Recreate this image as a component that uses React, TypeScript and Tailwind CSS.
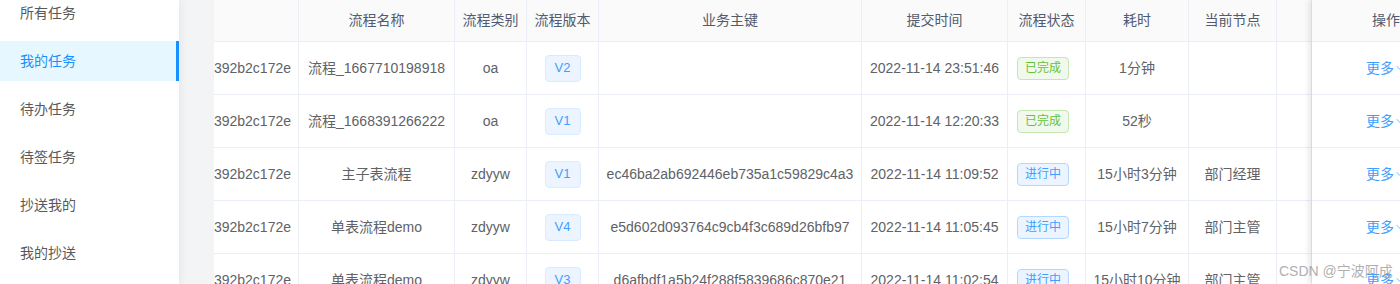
import React from 'react';
import { ChevronDown } from 'lucide-react';

interface TaskRow {
  id: string;
  name: string;
  category: string;
  version: string;
  bizKey: string;
  submitTime: string;
  status: 'done' | 'running';
  duration: string;
  node: string;
}

const ROWS: TaskRow[] = [
  { id: '392b2c172e', name: '流程_1667710198918', category: 'oa', version: 'V2', bizKey: '', submitTime: '2022-11-14 23:51:46', status: 'done', duration: '1分钟', node: '' },
  { id: '392b2c172e', name: '流程_1668391266222', category: 'oa', version: 'V1', bizKey: '', submitTime: '2022-11-14 12:20:33', status: 'done', duration: '52秒', node: '' },
  { id: '392b2c172e', name: '主子表流程', category: 'zdyyw', version: 'V1', bizKey: 'ec46ba2ab692446eb735a1c59829c4a3', submitTime: '2022-11-14 11:09:52', status: 'running', duration: '15小时3分钟', node: '部门经理' },
  { id: '392b2c172e', name: '单表流程demo', category: 'zdyyw', version: 'V4', bizKey: 'e5d602d093764c9cb4f3c689d26bfb97', submitTime: '2022-11-14 11:05:45', status: 'running', duration: '15小时7分钟', node: '部门主管' },
  { id: '392b2c172e', name: '单表流程demo', category: 'zdyyw', version: 'V3', bizKey: 'd6afbdf1a5b24f288f5839686c870e21', submitTime: '2022-11-14 11:02:54', status: 'running', duration: '15小时10分钟', node: '部门主管' },
];

const MENU = ['所有任务', '我的任务', '待办任务', '待签任务', '抄送我的', '我的抄送'];

const HEADERS = ['', '流程名称', '流程类别', '流程版本', '业务主键', '提交时间', '流程状态', '耗时', '当前节点', ''];

const GRID = 'grid grid-cols-[85px_156px_72px_72px_263px_146px_78px_103px_88px_35px]';

const cell = 'flex items-center justify-center border-r border-b border-[#ebeef5] whitespace-nowrap overflow-hidden';

const StatusTag: React.FC<{ status: TaskRow['status'] }> = ({ status }) =>
  status === 'done' ? (
    <span className="h-[23px] px-[7px] flex items-center rounded-[4px] border border-[#c2e7b0] bg-[#f0f9eb] text-[#67c23a] text-[12px]">
      已完成
    </span>
  ) : (
    <span className="h-[23px] px-[7px] flex items-center rounded-[4px] border border-[#b3d8ff] bg-[#ecf5ff] text-[#409eff] text-[12px]">
      进行中
    </span>
  );

export default function App() {
  return (
    <div
      className="relative flex w-[1400px] h-[284px] overflow-hidden bg-[#f3f4f5] text-[14px] text-[#606266]"
      style={{ fontFamily: '"Liberation Sans", "Noto Sans CJK SC", sans-serif' }}
    >
      {/* side menu */}
      <div className="w-[179px] shrink-0 bg-white shadow-[2px_0_8px_rgba(0,0,0,0.06)] z-10">
        <ul className="mt-[-7px] flex flex-col gap-2">
          {MENU.map((item, i) => (
            <li
              key={item}
              className={`h-10 flex items-center pl-5 ${
                i === 1
                  ? 'bg-[#e6f7ff] text-[#1890ff] border-r-[3px] border-[#1890ff]'
                  : 'text-[#595959]'
              }`}
            >
              {item}
            </li>
          ))}
        </ul>
      </div>

      {/* table */}
      <div className="ml-[35px] flex bg-white">
        <div className="w-[1098px] shrink-0 overflow-hidden">
          <div className={`${GRID} h-[42px] bg-[#fafafa] text-[#515a6e]`}>
            {HEADERS.map((h, i) => (
              <div key={i} className={cell}>{h}</div>
            ))}
          </div>
          {ROWS.map((r, i) => (
            <div key={i} className={`${GRID} h-[53px]`}>
              <div className={`${cell} justify-end pr-[7px]`}>{r.id}</div>
              <div className={cell}>{r.name}</div>
              <div className={cell}>{r.category}</div>
              <div className={cell}>
                <span className="w-9 h-[27px] flex items-center justify-center rounded-[4px] border border-[#d9ecff] bg-[#ecf5ff] text-[#409eff] text-[13px]">
                  {r.version}
                </span>
              </div>
              <div className={cell}>{r.bizKey}</div>
              <div className={cell}>{r.submitTime}</div>
              <div className={`${cell} justify-start pl-[9px]`}>
                <StatusTag status={r.status} />
              </div>
              <div className={cell}>{r.duration}</div>
              <div className={cell}>{r.node}</div>
              <div className={cell}></div>
            </div>
          ))}
        </div>

        {/* fixed action column */}
        <div className="w-[148px] shrink-0 bg-white shadow-[-3px_0_6px_rgba(0,0,0,0.1)] z-10">
          <div className="h-[42px] flex items-center justify-center bg-[#fafafa] border-b border-[#ebeef5] text-[#515a6e]">
            操作
          </div>
          {ROWS.map((_, i) => (
            <div key={i} className="h-[53px] flex items-center justify-center gap-0 border-b border-[#ebeef5] text-[#409eff]">
              更多
              <ChevronDown size={12} strokeWidth={1.5} />
            </div>
          ))}
        </div>
      </div>

      <div className="absolute left-[1279px] top-[261px] text-[14px] text-[#9a9a9a]/80 z-20">
        CSDN @宁波阿成
      </div>
    </div>
  );
}
